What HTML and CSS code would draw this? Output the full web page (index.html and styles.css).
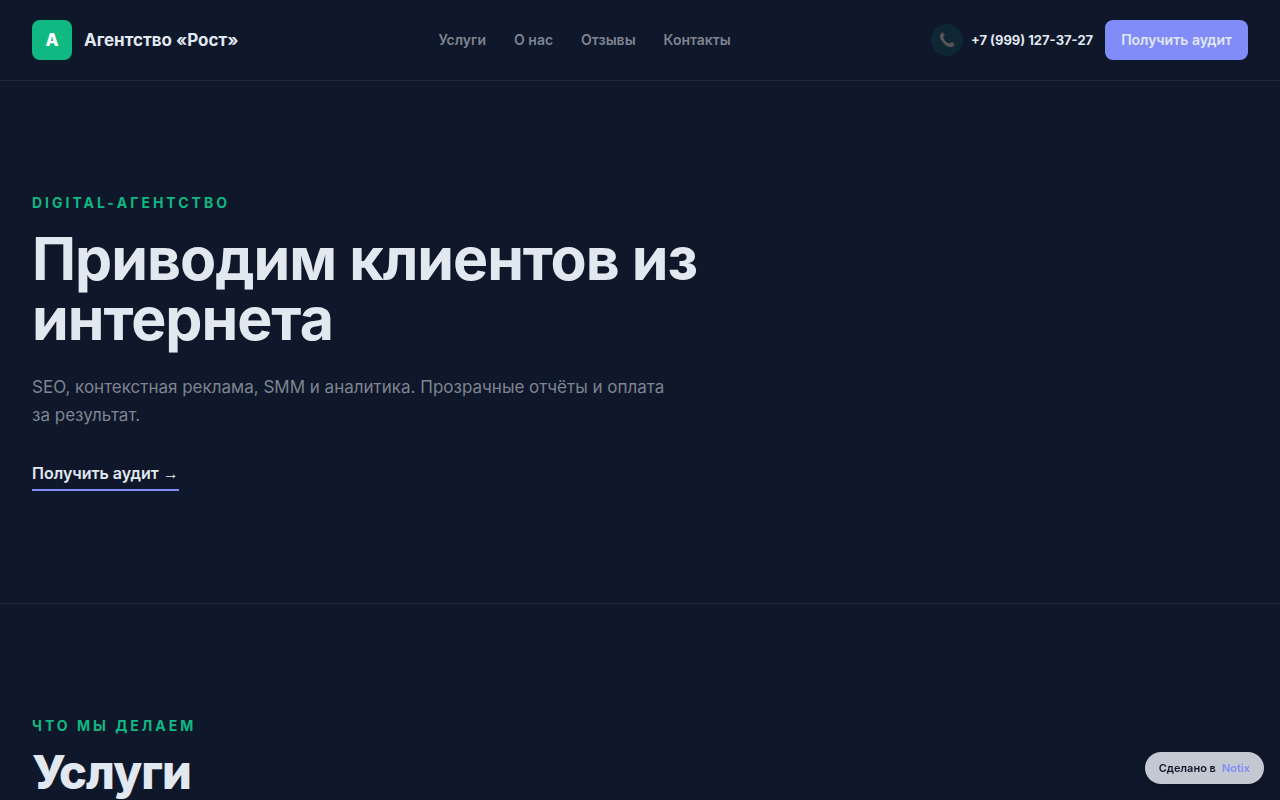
FILE: index.html
```html
<!DOCTYPE html>
<html lang="ru">
<head>
  <meta charset="UTF-8" />
  <title>Агентство «Рост»</title>
  <meta name="viewport" content="width=device-width, initial-scale=1.0" />
  <link rel="stylesheet" href="styles.css">
</head>
<body>

  <header class="header">
    <a href="#top" class="logo">
      <span class="logo-mark">А</span>
      <span class="logo-text">Агентство «Рост»</span>
    </a>
    <nav class="nav">
      <a href="#services">Услуги</a>
      <a href="#about">О нас</a>
      <a href="#reviews">Отзывы</a>
      <a href="#contacts">Контакты</a>
    </nav>
    <div class="header-actions">
      <a href="tel:+79991273727" class="phone">
        <span class="phone-icon">
          <svg width="16" height="16" viewBox="0 0 16 16" aria-hidden="true">
            <path class="phone-body" d="M1.3 2.2C2 .9 3.4.2 4.3.8c.8.5 1.4 2 1.2 3-.1.7-1 1-1.1 1.6 0 1.3 1.2 3 2.3 4 1 1 2.500 2 3.800 2 .7 0 .9-1 1.600-1.200 1-.3 2.700.4 3.200 1.300.5 1-.4 2.600-1.500 3.300-1.600 1-4.300.3-6.600-1.200-2.300-1.500-4.400-3.800-5.500-6.100C.8 5.500.6 3.600 1.300 2.200z"/>
            <path class="phone-shine" d="M2.300 3.100c.3 2.700 2 5.300 4.100 7.300 1.700 1.500 3.700 2.500 5.700 2.800"/>
          </svg>
        </span>
        +7 (999) 127-37-27
      </a>
      <button type="button" class="btn">Получить аудит</button>
    </div>
  </header>

  <main id="top">
    <section class="section">
      <p class="eyebrow">Digital-агентство</p>
      <h1>Приводим клиентов из интернета</h1>
      <p class="lead">SEO, контекстная реклама, SMM и аналитика. Прозрачные отчёты и оплата за результат.</p>
      <a href="#contacts" class="hero-link">Получить аудит <span class="arrow">→</span></a>
    </section>

    <section class="section" id="services">
      <p class="eyebrow">Что мы делаем</p>
      <h2>Услуги</h2>
    </section>
  </main>

  <a href="#notix" class="badge">Сделано в <span>Notix</span></a>

</body>
</html>
```
FILE: styles.css
```css
* { margin: 0; padding: 0; box-sizing: border-box; }

body {
  font-family: Inter, "Noto Sans", sans-serif;
  font-size: 14px; line-height: 20px;
  background: #0f172a; color: #e2e8f0;
}

a { color: inherit; text-decoration: none; }

/* header */
.header {
  display: flex; justify-content: space-between; align-items: center;
  padding: 20px 32px; border-bottom: 1px solid #1f2739;
}

.logo { display: flex; align-items: center; gap: 12px; }
.logo-mark {
  display: flex; align-items: center; justify-content: center;
  width: 40px; height: 40px; border-radius: 8px;
  background: #10b981; color: #fff; font-size: 17px; font-weight: 800;
}
.logo-text { font-size: 17px; font-weight: 700; }

.nav { display: flex; gap: 28px; color: #7e8490; font-weight: 600; }
.nav a:hover { color: #e2e8f0; }

.header-actions { display: flex; align-items: center; gap: 12px; }
.phone {
  display: flex; align-items: center; gap: 8px;
  font-size: 13px; font-weight: 700; white-space: nowrap;
}
.phone-icon {
  display: flex; align-items: center; justify-content: center;
  width: 32px; height: 32px; border-radius: 50%; background: #0f2732;
}
.phone-body { fill: #504e50; }
.phone-shine { fill: none; stroke: #696668; stroke-width: 1; stroke-linecap: round; }

.btn {
  height: 40px; padding: 0 16px; border: none; border-radius: 8px;
  background: #818cf8; color: #e2e8f0;
  font: inherit; font-weight: 600; cursor: pointer;
}
.btn:hover { background: #6d79f0; }

/* sections */
.section { padding: 112px 32px; }
.section + .section { border-top: 1px solid #1f2739; }

.eyebrow {
  color: #10b981; font-weight: 700;
  letter-spacing: 3px; text-transform: uppercase;
}

h1 {
  max-width: 768px; margin-top: 16px;
  font-size: 59px; line-height: 60px; font-weight: 700; letter-spacing: -1px;
}
h2 {
  margin-top: 12px;
  font-size: 47px; line-height: 48px; font-weight: 800; letter-spacing: -1px;
}

.lead {
  max-width: 640px; margin-top: 24px;
  color: #7e8490; font-size: 17px; line-height: 28px;
}

.hero-link {
  display: inline-block; margin-top: 32px; padding-bottom: 4px;
  border-bottom: 2px solid #818cf8;
  font-size: 16px; line-height: 24px; font-weight: 600; vertical-align: top;
}
.arrow { font-family: "Liberation Sans", sans-serif; line-height: 16px; }

/* floating badge */
.badge {
  position: fixed; right: 16px; bottom: 16px;
  display: flex; align-items: center; gap: 6px;
  height: 32px; padding: 0 14px; border-radius: 16px;
  background: #c3c8d2; color: #0f172a;
  font-size: 11px; font-weight: 600;
  box-shadow: 0 4px 12px rgba(0, 0, 0, 0.2);
}
.badge span { color: #818cf8; }

@media (max-width: 900px) {
  .nav { display: none; }
  h1 { font-size: 40px; line-height: 44px; }
}
```
